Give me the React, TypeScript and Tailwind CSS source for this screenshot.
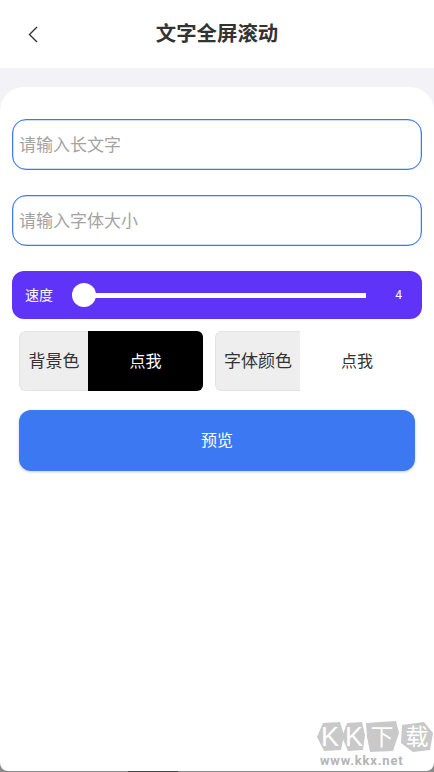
const font = "font-['Roboto','Noto_Sans_CJK_SC',sans-serif]";

function Field({ placeholder }: { placeholder: string }) {
  return (
    <div className="flex h-[51px] items-center rounded-[14px] border border-[#3b78f2] px-[6px] pt-[2px] text-[17px] text-[#a3a3a3] shadow-[inset_0_0_0_0.25px_#3b78f2]">
      {placeholder}
    </div>
  );
}

function Picker({ label, className, labelWidth, dark }: { label: string; className: string; labelWidth: string; dark?: boolean }) {
  return (
    <div className={`flex h-[60px] overflow-hidden rounded-[6px] ${className}`}>
      <div className={`flex ${labelWidth} shrink-0 items-center justify-center rounded-l-[6px] border border-r-0 border-[#e3e3e3] bg-[#eeeeee] pt-[2px] text-[17px] text-[#333333]`}>
        {label}
      </div>
      <div className={`flex flex-1 items-center justify-center pt-[1px] text-[16px] ${dark ? 'bg-black text-white' : 'bg-white text-[#333333]'}`}>
        点我
      </div>
    </div>
  );
}

// kkx logo tiles, text stays real text on top of the blobs
function Watermark() {
  return (
    <div className="pointer-events-none absolute bottom-[4px] left-[316px] w-[118px]">
      <svg width="118" height="36" viewBox="0 0 118 36" className="block">
        <polygon points="7,4 24,3 28,16 25,31 8,32 1,18" fill="#c9c9c9" />
        <polygon points="31,4 46,3 49,16 47,31 32,32 26,18" fill="#c9c9c9" />
        <polygon points="50,4 80,2 83,14 77,32 54,33 51,18" fill="#c9c9c9" />
        <polygon points="86,6 108,3 117,14 114,31 97,33 85,24" fill="#c9c9c9" />
        <text x="14" y="27" textAnchor="middle" fontFamily="Liberation Sans" fontSize="27" fill="#ffffff">K</text>
        <text x="38" y="27" textAnchor="middle" fontFamily="Liberation Sans" fontSize="27" fill="#ffffff">K</text>
        <text x="66" y="26" textAnchor="middle" fontFamily="Noto Sans CJK SC" fontSize="23" fill="#ffffff">下</text>
        <text x="101" y="26" textAnchor="middle" fontFamily="Noto Sans CJK SC" fontSize="23" fill="#ffffff">载</text>
      </svg>
      <div className="-mt-[1px] pl-[4px] text-[13px] font-bold leading-[14px] tracking-[0.8px] text-[#b5b5b5]">www.kkx.net</div>
    </div>
  );
}

export default function App() {
  return (
    <div className={`relative h-[772px] w-[434px] overflow-hidden bg-[#f2f2f7] ${font}`}>
      {/* Screen edge behind the card's lower corners */}
      <div className="absolute inset-x-0 bottom-0 h-4 bg-[#8a8a8a]" />
      <div className="absolute bottom-0 left-[128px] z-10 h-px w-[50px] bg-[#444444]" />

      {/* Header */}
      <div className="flex h-[68px] items-center justify-center bg-white">
        <svg className="absolute left-[26px] top-[24px]" width="14" height="20" viewBox="0 0 14 20" fill="none">
          <path d="M11 3 L3.5 10.5 L11 18" stroke="#333333" strokeWidth="1.4" />
        </svg>
        <h1 className="text-[20.4px] font-bold text-[#333333]">文字全屏滚动</h1>
      </div>

      {/* Card */}
      <div className="relative mt-[19px] h-[684px] rounded-t-[24px] rounded-b-[8px] bg-white px-3 pt-8">
        <div className="flex flex-col gap-[25px]">
          <Field placeholder="请输入长文字" />
          <Field placeholder="请输入字体大小" />
        </div>

        {/* Speed slider */}
        <div className="mt-[25px] flex h-[48px] items-center rounded-[12px] bg-[#5f33f8] pl-[13px] pr-[20px] text-white">
          <span className="w-[47px] shrink-0 text-[14px]">速度</span>
          <div className="flex flex-1 items-center">
            <div className="z-10 h-6 w-6 shrink-0 rounded-full bg-white" />
            <div className="-ml-px h-[5px] w-[271px] bg-white" />
          </div>
          <span className="text-[12px]">4</span>
        </div>

        {/* Colour pickers */}
        <div className="mt-3 flex gap-3 px-[7px]">
          <Picker label="背景色" className="w-[184px]" labelWidth="w-[69px]" dark />
          <Picker label="字体颜色" className="w-[199px]" labelWidth="w-[85px]" />
        </div>

        <div className="mt-[19px] px-[7px]">
          <button className="h-[61px] w-full rounded-[12px] bg-[#3b78f2] text-[16px] text-white shadow-[0_1px_3px_rgba(0,0,0,0.2)]">
            预览
          </button>
        </div>
      </div>

      <Watermark />
    </div>
  );
}
